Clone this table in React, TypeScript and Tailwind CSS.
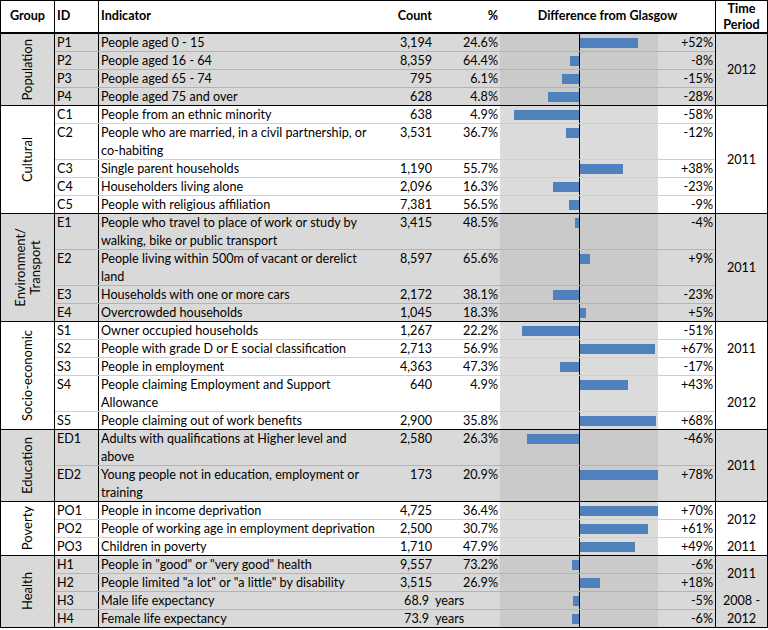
import React from "react";

// ── Types ─────────────────────────────────────────────────────────────────────
interface Row {
  id: string;
  lines: string[];
  count: string;
  pct: string;
  diff: number;
}

interface Period {
  label: string[];
  span: number;
}

interface Group {
  name: string[];
  shaded: boolean;
  rows: Row[];
  periods: Period[];
}

// ── Data ──────────────────────────────────────────────────────────────────────
const GROUPS: Group[] = [
  {
    name: ["Population"],
    shaded: true,
    periods: [{ label: ["2012"], span: 4 }],
    rows: [
      { id: "P1", lines: ["People aged 0 - 15"], count: "3,194", pct: "24.6%", diff: 52 },
      { id: "P2", lines: ["People aged 16 - 64"], count: "8,359", pct: "64.4%", diff: -8 },
      { id: "P3", lines: ["People aged 65 - 74"], count: "795", pct: "6.1%", diff: -15 },
      { id: "P4", lines: ["People aged 75 and over"], count: "628", pct: "4.8%", diff: -28 },
    ],
  },
  {
    name: ["Cultural"],
    shaded: false,
    periods: [{ label: ["2011"], span: 5 }],
    rows: [
      { id: "C1", lines: ["People from an ethnic minority"], count: "638", pct: "4.9%", diff: -58 },
      {
        id: "C2",
        lines: ["People who are married, in a civil partnership, or", "co-habiting"],
        count: "3,531",
        pct: "36.7%",
        diff: -12,
      },
      { id: "C3", lines: ["Single parent households"], count: "1,190", pct: "55.7%", diff: 38 },
      { id: "C4", lines: ["Householders living alone"], count: "2,096", pct: "16.3%", diff: -23 },
      { id: "C5", lines: ["People with religious affiliation"], count: "7,381", pct: "56.5%", diff: -9 },
    ],
  },
  {
    name: ["Environment/", "Transport"],
    shaded: true,
    periods: [{ label: ["2011"], span: 4 }],
    rows: [
      {
        id: "E1",
        lines: ["People who travel to place of work or study by", "walking, bike or public transport"],
        count: "3,415",
        pct: "48.5%",
        diff: -4,
      },
      {
        id: "E2",
        lines: ["People living within 500m of vacant or derelict", "land"],
        count: "8,597",
        pct: "65.6%",
        diff: 9,
      },
      { id: "E3", lines: ["Households with one or more cars"], count: "2,172", pct: "38.1%", diff: -23 },
      { id: "E4", lines: ["Overcrowded households"], count: "1,045", pct: "18.3%", diff: 5 },
    ],
  },
  {
    name: ["Socio-economic"],
    shaded: false,
    periods: [
      { label: ["2011"], span: 3 },
      { label: ["2012"], span: 2 },
    ],
    rows: [
      { id: "S1", lines: ["Owner occupied households"], count: "1,267", pct: "22.2%", diff: -51 },
      {
        id: "S2",
        lines: ["People with grade D or E social classification"],
        count: "2,713",
        pct: "56.9%",
        diff: 67,
      },
      { id: "S3", lines: ["People in employment"], count: "4,363", pct: "47.3%", diff: -17 },
      {
        id: "S4",
        lines: ["People claiming Employment and Support", "Allowance"],
        count: "640",
        pct: "4.9%",
        diff: 43,
      },
      { id: "S5", lines: ["People claiming out of work benefits"], count: "2,900", pct: "35.8%", diff: 68 },
    ],
  },
  {
    name: ["Education"],
    shaded: true,
    periods: [{ label: ["2011"], span: 2 }],
    rows: [
      {
        id: "ED1",
        lines: ["Adults with qualifications at Higher level and", "above"],
        count: "2,580",
        pct: "26.3%",
        diff: -46,
      },
      {
        id: "ED2",
        lines: ["Young people not in education, employment or", "training"],
        count: "173",
        pct: "20.9%",
        diff: 78,
      },
    ],
  },
  {
    name: ["Poverty"],
    shaded: false,
    periods: [
      { label: ["2012"], span: 2 },
      { label: ["2011"], span: 1 },
    ],
    rows: [
      { id: "PO1", lines: ["People in income deprivation"], count: "4,725", pct: "36.4%", diff: 70 },
      {
        id: "PO2",
        lines: ["People of working age in employment deprivation"],
        count: "2,500",
        pct: "30.7%",
        diff: 61,
      },
      { id: "PO3", lines: ["Children in poverty"], count: "1,710", pct: "47.9%", diff: 49 },
    ],
  },
  {
    name: ["Health"],
    shaded: true,
    periods: [
      { label: ["2011"], span: 2 },
      { label: ["2008 -", "2012"], span: 2 },
    ],
    rows: [
      {
        id: "H1",
        lines: ['People in "good" or "very good" health'],
        count: "9,557",
        pct: "73.2%",
        diff: -6,
      },
      {
        id: "H2",
        lines: ['People limited "a lot" or "a little" by disability'],
        count: "3,515",
        pct: "26.9%",
        diff: 18,
      },
      { id: "H3", lines: ["Male life expectancy"], count: "68.9", pct: "years", diff: -5 },
      { id: "H4", lines: ["Female life expectancy"], count: "73.9", pct: "years", diff: -6 },
    ],
  },
];

const LINE = 18;
const PX_PER_PCT = 1.12;
const HALF = 79;

const rowHeight = (r: Row) => r.lines.length * LINE;

// ── Bar chart cell ────────────────────────────────────────────────────────────
function DiffBar({ diff, shaded }: { diff: number; shaded: boolean }) {
  const w = Math.min(Math.round(Math.abs(diff) * PX_PER_PCT), HALF - 1);
  return (
    <div className={`flex w-[158px] shrink-0 self-stretch ${shaded ? "bg-[#cacaca]" : "bg-[#dbdbdb]"}`}>
      <div className="flex w-[79px] justify-end">
        {diff < 0 && <div className="mt-[4px] h-[10px] bg-[#4f81bd]" style={{ width: w }} />}
      </div>
      <div className="w-px bg-black" />
      <div className="flex w-[78px] justify-start">
        {diff > 0 && <div className="mt-[4px] h-[10px] bg-[#4f81bd]" style={{ width: w }} />}
      </div>
    </div>
  );
}

// ── One indicator row ─────────────────────────────────────────────────────────
function IndicatorRow({ row, last, shaded }: { row: Row; last: boolean; shaded: boolean }) {
  const isYears = row.pct === "years";
  return (
    <div
      className={`flex items-start ${last ? "" : shaded ? "border-b border-[#b4b4b4]" : "border-b border-[#cfcfcf]"}`}
      style={{ height: rowHeight(row) - (last ? 1 : 0) }}
    >
      <div className="w-[44px] shrink-0 self-stretch border-r border-black pl-[2px] leading-[17px]">{row.id}</div>
      <div className="w-[276px] shrink-0 pl-[2px] leading-[18px] whitespace-nowrap">
        {row.lines.map((l, i) => (
          <div key={i}>{l}</div>
        ))}
      </div>
      <div className={`w-[59px] shrink-0 text-right leading-[17px] ${isYears ? "pr-[5px]" : "pr-[2px]"}`}>
        {row.count}
      </div>
      <div className={`w-[66px] shrink-0 leading-[17px] ${isYears ? "pl-[1px] text-left" : "pr-[2px] text-right"}`}>
        {row.pct}
      </div>
      <DiffBar diff={row.diff} shaded={shaded} />
      <div className="w-[57px] shrink-0 pr-[2px] text-right leading-[17px]">
        {row.diff > 0 ? "+" : ""}
        {row.diff}%
      </div>
    </div>
  );
}

// ── Group block ───────────────────────────────────────────────────────────────
function GroupBlock({ group, last }: { group: Group; last: boolean }) {
  let start = 0;
  return (
    <div className={`flex ${last ? "" : "border-b border-black"} ${group.shaded ? "bg-[#d9d9d9]" : "bg-white"}`}>
      <div className="flex w-[54px] shrink-0 items-center justify-center border-r border-black">
        <div className="rotate-180 text-center text-[13px] leading-[15px] whitespace-nowrap [writing-mode:vertical-rl]">
          {group.name.map((n, i) => (
            <div key={i}>{n}</div>
          ))}
        </div>
      </div>

      <div className="flex w-[660px] shrink-0 flex-col">
        {group.rows.map((r, i) => (
          <IndicatorRow key={r.id} row={r} last={i === group.rows.length - 1} shaded={group.shaded} />
        ))}
      </div>

      <div className="flex flex-1 flex-col border-l border-black">
        {group.periods.map((p, i) => {
          const rows = group.rows.slice(start, start + p.span);
          start += p.span;
          const h = rows.reduce((s, r) => s + rowHeight(r), 0) - (i === group.periods.length - 1 ? 1 : 0);
          return (
            <div key={i} className="flex flex-col items-center justify-center leading-[18px]" style={{ height: h }}>
              {p.label.map((l, j) => (
                <div key={j}>{l}</div>
              ))}
            </div>
          );
        })}
      </div>
    </div>
  );
}

// ── Page ──────────────────────────────────────────────────────────────────────
export default function App() {
  return (
    <div className="h-[630px] w-[768px] bg-white font-['Lato','Liberation_Sans',sans-serif] text-[12.6px] text-black">
      <div className="border border-black">
        {/* Header */}
        <div className="flex h-[33px] items-stretch border-b-2 border-black font-bold">
          <div className="flex w-[54px] shrink-0 items-center justify-center border-r border-black">Group</div>
          <div className="flex w-[44px] shrink-0 items-center border-r border-black pl-[2px]">ID</div>
          <div className="flex w-[276px] shrink-0 items-center pl-[2px]">Indicator</div>
          <div className="flex w-[59px] shrink-0 items-center justify-end pr-[2px]">Count</div>
          <div className="flex w-[66px] shrink-0 items-center justify-end pr-[2px]">%</div>
          <div className="flex w-[215px] shrink-0 items-center justify-center">Difference from Glasgow</div>
          <div className="flex flex-1 flex-col items-center justify-center border-l border-black leading-[16px]">
            <span>Time</span>
            <span>Period</span>
          </div>
        </div>

        {GROUPS.map((g, i) => (
          <GroupBlock key={g.name.join(" ")} group={g} last={i === GROUPS.length - 1} />
        ))}
      </div>
    </div>
  );
}
